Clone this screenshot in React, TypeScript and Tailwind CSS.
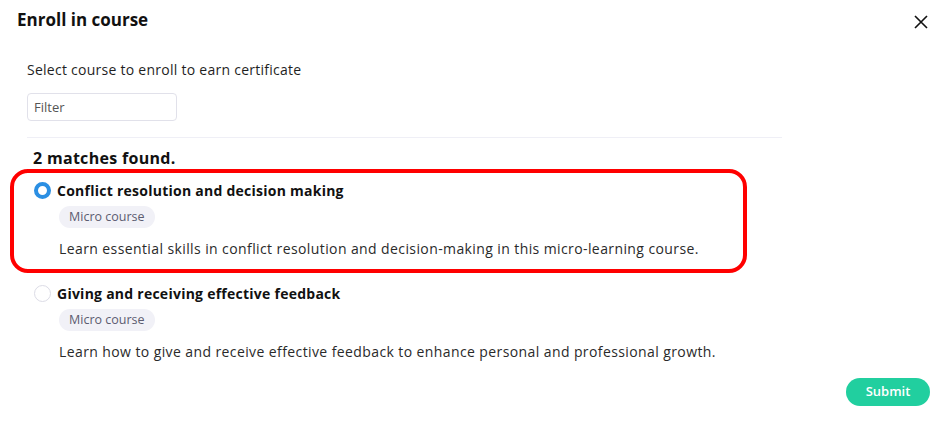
import React, { useState } from "react";

interface Course {
  id: string;
  title: string;
  tag: string;
  description: string;
}

const courses: Course[] = [
  {
    id: "conflict",
    title: "Conflict resolution and decision making",
    tag: "Micro course",
    description:
      "Learn essential skills in conflict resolution and decision-making in this micro-learning course.",
  },
  {
    id: "feedback",
    title: "Giving and receiving effective feedback",
    tag: "Micro course",
    description:
      "Learn how to give and receive effective feedback to enhance personal and professional growth.",
  },
];

const CourseOption: React.FC<{
  course: Course;
  checked: boolean;
  onSelect: (id: string) => void;
}> = ({ course, checked, onSelect }) => (
  <label className="flex items-start gap-[6px] cursor-pointer" onClick={() => onSelect(course.id)}>
    <span
      className={`mt-[2px] w-[17px] h-[17px] rounded-full shrink-0 bg-white ${
        checked ? "border-[4px] border-[#2b8fe3]" : "border border-[#dcdce6]"
      }`}
    />
    <div className="flex flex-col">
      <span className="text-[14px] leading-[22px] font-bold tracking-[0.25px] text-[#111]">{course.title}</span>
      <span className="mt-[4px] ml-[2px] self-start px-[10px] h-[22px] flex items-center rounded-full bg-[#f1f1f7] text-[12.5px] text-[#5c5c70]">
        {course.tag}
      </span>
      <p className="mt-[11px] ml-[2px] text-[14px] leading-[20px] tracking-[0.4px] text-[#2a2a2a]">
        {course.description}
      </p>
    </div>
  </label>
);

export default function App() {
  const [selected, setSelected] = useState("conflict");

  return (
    <div className="relative w-[947px] h-[425px] bg-white overflow-hidden font-['Open_Sans',sans-serif] text-[#111]">
      <div className="flex items-start justify-between pl-[17px] pr-[17px] pt-[8px]">
        <h2 className="text-[17px] leading-[24px] font-bold">Enroll in course</h2>
        <button className="mt-[5px] text-[#111]">
          <svg width="18" height="18" viewBox="0 0 24 24" fill="none" stroke="currentColor" strokeWidth={2.2}>
            <path d="M4 4l16 16M20 4L4 20" />
          </svg>
        </button>
      </div>

      <div className="pl-[27px] pr-[165px] mt-[28px]">
        <p className="text-[14px] leading-[20px] tracking-[0.26px] text-[#1f1f1f]">
          Select course to enroll to earn certificate
        </p>
        <input
          placeholder="Filter"
          className="mt-[13px] w-[150px] h-[28px] px-[6px] text-[13px] border border-[#e1e1ea] rounded-[4px] outline-none placeholder:text-[#555]"
        />
        <div className="mt-[16px] h-px bg-[#efeff6]" />

        <h3 className="mt-[9px] ml-[6px] text-[16px] leading-[22px] font-bold tracking-[0.3px]">2 matches found.</h3>

        <div className="mt-[11px] ml-[7px] flex flex-col gap-[24px]">
          {courses.map((c) => (
            <CourseOption key={c.id} course={c} checked={selected === c.id} onSelect={setSelected} />
          ))}
        </div>
      </div>

      <div className="absolute left-[10px] top-[169px] w-[737px] h-[104px] rounded-[18px] border-[4px] border-[#ff0000] pointer-events-none" />

      <div className="flex justify-end pr-[17px] mt-[16px]">
        <button className="w-[84px] h-[28px] rounded-full bg-[#21cf9f] text-white text-[13px] font-semibold">
          Submit
        </button>
      </div>
    </div>
  );
}
